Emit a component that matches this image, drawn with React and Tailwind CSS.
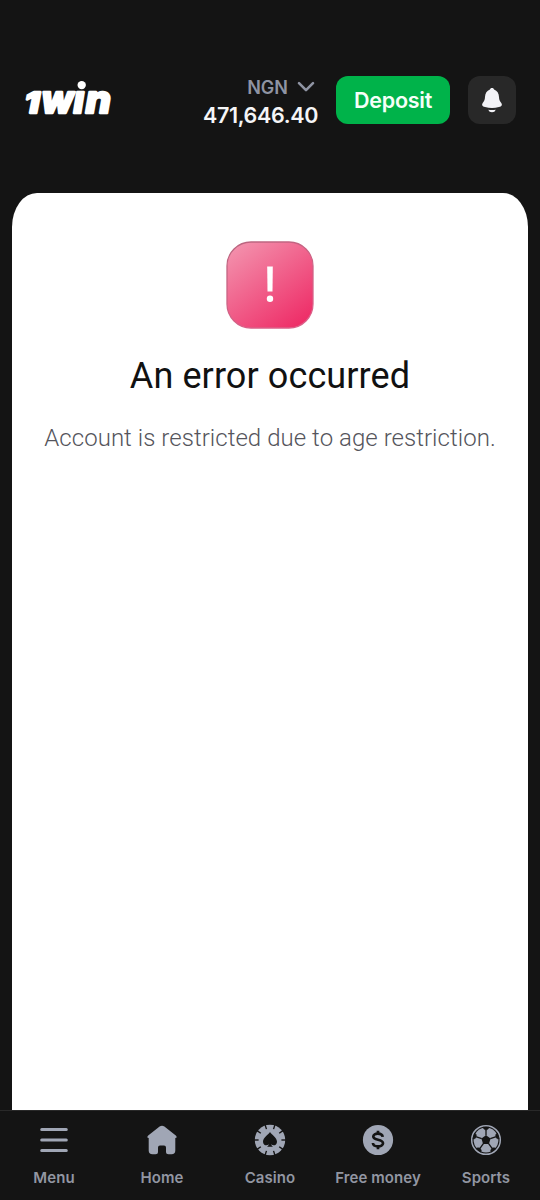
function Logo() {
  return (
    <svg width="96" height="48" viewBox="0 0 96 48" className="block shrink-0 overflow-visible" role="img" aria-label="1win">
      <g
        fill="#fff"
        stroke="#fff"
        strokeLinejoin="round"
        fontFamily="Inter, sans-serif"
        fontWeight="800"
        fontStyle="italic"
      >
        <text x="4.5" y="37" fontSize="28" strokeWidth="2.4" textLength="15" lengthAdjust="spacingAndGlyphs">1</text>
        <g strokeWidth="2.4">
          <text x="21.5" y="37.2" fontSize="37.5" textLength="32" lengthAdjust="spacingAndGlyphs">w</text>
          <text x="53.5" y="37.2" fontSize="37.5">ı</text>
          <text x="65.5" y="37.2" fontSize="37.5" textLength="25.5" lengthAdjust="spacingAndGlyphs">n</text>
        </g>
      </g>
      <circle cx="61.7" cy="9.1" r="4.2" fill="#fff" />
    </svg>
  );
}

function ErrorBadge() {
  return (
    <svg width="88" height="88" viewBox="0 0 88 88" className="block">
      <defs>
        <linearGradient id="pink" x1="0.1" y1="0" x2="0.85" y2="1">
          <stop offset="0" stopColor="#f393ae" />
          <stop offset="1" stopColor="#ee2b66" />
        </linearGradient>
        <linearGradient id="edge" x1="0" y1="0" x2="0.5" y2="1">
          <stop offset="0" stopColor="#b8667f" />
          <stop offset="1" stopColor="#dc5f88" />
        </linearGradient>
      </defs>
      <rect x="1" y="1" width="86" height="86" rx="24" fill="url(#pink)" stroke="url(#edge)" strokeWidth="1.3" />
      <path d="M41.2 25.5h5.6l-.3 25h-5z" fill="#fff" />
      <circle cx="44" cy="57.8" r="3.2" fill="#fff" />
    </svg>
  );
}

function MenuIcon() {
  return (
    <svg width="32" height="32" viewBox="0 0 32 32" stroke="currentColor" strokeWidth="3" strokeLinecap="round">
      <path d="M3.7 5.6h24.6M3.7 16h24.6M3.7 26.4h24.6" />
    </svg>
  );
}

function HomeIcon() {
  return (
    <svg width="32" height="32" viewBox="0 0 32 32" fill="currentColor">
      <path d="M13.6 2.6Q16 .8 18.4 2.6L29.8 11.4Q31.8 13.4 29.3 14.1V26.5Q29.3 30.3 25.5 30.3H22.5Q20 30.3 20 27.8V23.5Q20 21.5 18 21.5H14Q12 21.5 12 23.5V27.8Q12 30.3 9.5 30.3H6.5Q2.7 30.3 2.7 26.5V14.1Q.2 13.4 2.2 11.4Z" />
    </svg>
  );
}

const chipNotches = [18, 54, 90, 126, 162, 198, 234, 270, 306, 342];

function CasinoIcon() {
  return (
    <svg width="32" height="32" viewBox="0 0 32 32">
      <circle cx="16" cy="16" r="15.2" fill="currentColor" />
      {chipNotches.map((angle) => (
        <rect key={angle} x="15.3" y="0" width="1.4" height="4.6" fill="#141414" transform={`rotate(${angle} 16 16)`} />
      ))}
      <path
        d="M16 8C14.6 10.4 9 13.5 9 17.7C9 21.4 13 22.3 14.8 20.2C14.6 21.5 13.8 22.2 13 22.8H19C18.2 22.2 17.4 21.5 17.2 20.2C19 22.3 23 21.4 23 17.7C23 13.5 17.4 10.4 16 8Z"
        fill="#141414"
      />
    </svg>
  );
}

function MoneyIcon() {
  return (
    <svg width="32" height="32" viewBox="0 0 32 32">
      <circle cx="16" cy="16" r="15.1" fill="currentColor" />
      <g fill="none" stroke="#141414" strokeWidth="2.7">
        <path d="M20.7 12.8C20.2 8.7 11.3 8.6 11.3 12.5C11.3 17 21 14.5 21 19.3C21 23.6 11.3 23.5 10.9 19" />
        <path d="M16 6.8v3M16 22v3.2" />
      </g>
    </svg>
  );
}

const ballPanels = [0, 72, 144, 216, 288];

function BallIcon() {
  return (
    <svg width="32" height="32" viewBox="0 0 32 32">
      <circle cx="16" cy="16" r="14.3" fill="none" stroke="currentColor" strokeWidth="1.5" />
      <circle cx="16" cy="16" r="12.4" fill="currentColor" />
      {ballPanels.map((angle) => (
        <g key={angle} fill="#141414" stroke="#141414" transform={`rotate(${angle} 16 16)`}>
          <path d="M16 11.5V6" strokeWidth="1.3" />
          <path d="M12.8 3.1H19.2L18.2 4.9L16 6.2L13.8 4.9Z" strokeWidth=".4" />
        </g>
      ))}
      <path d="M16 11.2L20.6 14.5L18.9 20H13.1L11.4 14.5Z" fill="#141414" />
    </svg>
  );
}

const tabs = [
  { label: 'Menu', Icon: MenuIcon },
  { label: 'Home', Icon: HomeIcon },
  { label: 'Casino', Icon: CasinoIcon },
  { label: 'Free money', Icon: MoneyIcon },
  { label: 'Sports', Icon: BallIcon },
];

export default function App() {
  return (
    <div className="flex h-[1200px] w-[540px] flex-col overflow-hidden bg-[#141414] font-['Inter',sans-serif]">
      <header className="flex h-[193px] shrink-0 items-start pr-6 pl-5 pt-[76px]">
        <Logo />
        <div className="ml-auto mr-[18px] flex flex-col items-end">
          <div className="flex h-[22px] items-center gap-[9px] pr-[3px] text-[18px] font-semibold text-[#8f94a3]">
            <span>NGN</span>
            <svg width="18" height="12" viewBox="0 0 18 12" fill="none" stroke="currentColor" strokeWidth="2.6" strokeLinecap="round" strokeLinejoin="round">
              <path d="M2 2.2L9 9.2L16 2.2" />
            </svg>
          </div>
          <div className="mt-[3px] text-[21.5px] leading-[28px] font-semibold tracking-[-0.35px] whitespace-nowrap text-[#f5f5f7]">471,646.40</div>
        </div>
        <button className="mr-[18px] h-12 w-[114px] rounded-xl bg-[#00b34a] text-[21.5px] font-semibold tracking-[-0.25px] text-[#f5fff8]">Deposit</button>
        <button className="flex size-12 items-center justify-center rounded-xl bg-[#282828]" aria-label="Notifications">
          <svg width="24" height="28" viewBox="0 0 24 28" fill="#f2f2f6">
            <path d="M12 2C10.8 2 10.1 2.7 9.9 3.6C6.8 4.7 5.1 7.5 5 11.1C4.9 14.3 4 15.1 2.7 17C1.4 18.9 2.2 20.4 5 21.1Q12 23 19 21.1C21.8 20.4 22.6 18.9 21.3 17C20 15.1 19.1 14.3 19 11.1C18.9 7.5 17.2 4.7 14.1 3.6C13.9 2.7 13.2 2 12 2Z" />
            <path d="M8.2 23.7Q12 24.4 15.8 23.7Q14.8 26.2 12 26.2T8.2 23.7Z" />
          </svg>
        </button>
      </header>
      <main className="mx-3 flex min-h-0 flex-1 flex-col items-center bg-white pt-12 font-['Roboto',sans-serif] [border-radius:25px_25px_0_0/34px_34px_0_0]">
        <ErrorBadge />
        <h1 className="mt-[23px] text-[36px] leading-[48px] font-normal tracking-[0.1px] whitespace-nowrap text-[#111]">An error occurred</h1>
        <p className="mt-[22px] text-[24px] leading-[32px] font-light tracking-[0.045px] whitespace-nowrap text-[#55555c]">Account is restricted due to age restriction.</p>
      </main>
      <nav className="grid h-[90px] shrink-0 grid-cols-5 border-t border-[#292929] bg-[#141414] pt-[13px] text-[#a0a6b5]">
        {tabs.map(({ label, Icon }) => (
          <a key={label} className="flex flex-col items-center gap-3">
            <Icon />
            <span className="text-[15px] leading-[20px] font-semibold tracking-[0.08px] whitespace-nowrap text-[#9296a2]">{label}</span>
          </a>
        ))}
      </nav>
    </div>
  );
}
